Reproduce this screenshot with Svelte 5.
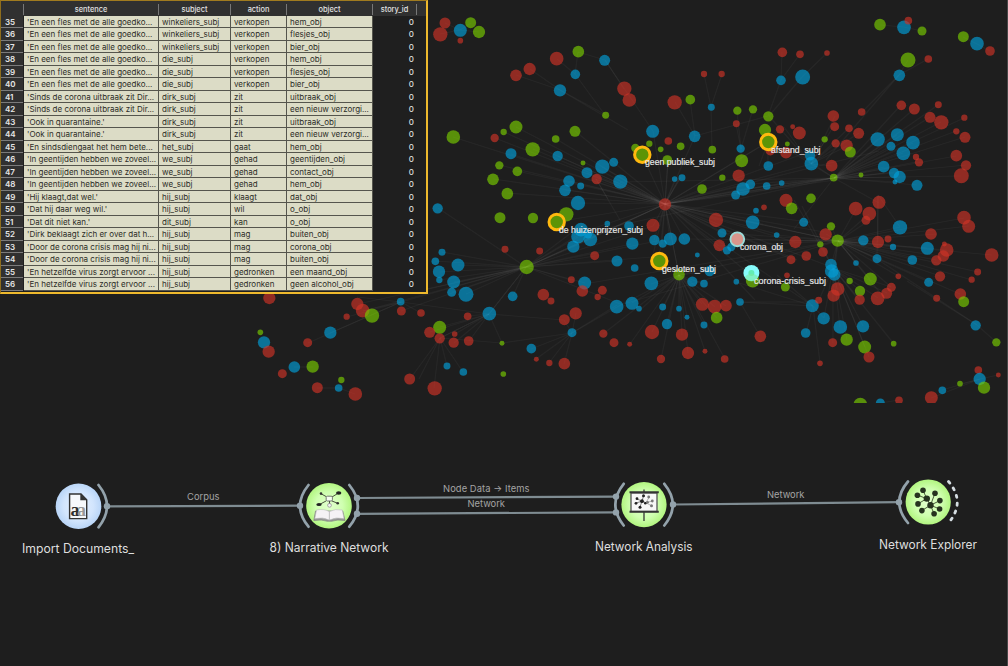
<script>
  const rows = [
    [35, "'En een fles met de alle goedko...", 'winkeliers_subj', 'verkopen', 'hem_obj'],
    [36, "'En een fles met de alle goedko...", 'winkeliers_subj', 'verkopen', 'flesjes_obj'],
    [37, "'En een fles met de alle goedko...", 'winkeliers_subj', 'verkopen', 'bier_obj'],
    [38, "'En een fles met de alle goedko...", 'die_subj', 'verkopen', 'hem_obj'],
    [39, "'En een fles met de alle goedko...", 'die_subj', 'verkopen', 'flesjes_obj'],
    [40, "'En een fles met de alle goedko...", 'die_subj', 'verkopen', 'bier_obj'],
    [41, "'Sinds de corona uitbraak zit Dir...", 'dirk_subj', 'zit', 'uitbraak_obj'],
    [42, "'Sinds de corona uitbraak zit Dir...", 'dirk_subj', 'zit', 'een nieuw verzorgi...'],
    [43, "'Ook in quarantaine.'", 'dirk_subj', 'zit', 'uitbraak_obj'],
    [44, "'Ook in quarantaine.'", 'dirk_subj', 'zit', 'een nieuw verzorgi...'],
    [45, "'En sindsdiengaat het hem bete...", 'het_subj', 'gaat', 'hem_obj'],
    [46, "'In geentijden hebben we zoveel...", 'we_subj', 'gehad', 'geentijden_obj'],
    [47, "'In geentijden hebben we zoveel...", 'we_subj', 'gehad', 'contact_obj'],
    [48, "'In geentijden hebben we zoveel...", 'we_subj', 'gehad', 'hem_obj'],
    [49, "'Hij klaagt,dat wel.'", 'hij_subj', 'klaagt', 'dat_obj'],
    [50, "'Dat hij daar weg wil.'", 'hij_subj', 'wil', 'o_obj'],
    [51, "'Dat dit niet kan.'", 'dit_subj', 'kan', 'o_obj'],
    [52, "'Dirk beklaagt zich er over dat h...", 'hij_subj', 'mag', 'buiten_obj'],
    [53, "'Door de corona crisis mag hij ni...", 'hij_subj', 'mag', 'corona_obj'],
    [54, "'Door de corona crisis mag hij ni...", 'hij_subj', 'mag', 'buiten_obj'],
    [55, "'En hetzelfde virus zorgt ervoor ...", 'hij_subj', 'gedronken', 'een maand_obj'],
    [56, "'En hetzelfde virus zorgt ervoor ...", 'hij_subj', 'gedronken', 'geen alcohol_obj']
  ];

  // Node clusters: origin in px, then "kind x y radius" in thirds of a pixel.
  const clusters = [
    [428, 0, 'r 51 69 16,r 37 103 21,b 97 91 19,g 128 68 16,g 153 96 18,r 97 122 8,r 386 176 20,g 451 155 17,b 530 181 16,b 442 223 14,r 305 207 18,r 264 226 17,b 396 271 18,r 589 266 21,g 533 346 10,g 264 381 19,g 227 396 9,r 200 414 12,g 76 411 20,g 383 417 11,g 441 394 16,g 314 448 21,b 249 461 16,b 389 468 15,g 214 496 12,g 268 514 14,g 195 538 17,g 238 581 17,g 465 489 7,b 523 500 21,b 557 487 13,b 477 518 16,r 506 537 15,b 423 543 17,b 411 571 17,b 458 558 10,b 577 545 21'],
    [618, 0, 'r 34 300 20,b 104 394 19,r 170 307 21,g 217 299 14,r 258 222 9,r 311 222 9,b 280 322 10,b 230 409 17,r 151 423 11,g 94 431 9,g 128 448 8,g 188 439 11,g 52 444 12,g 283 449 11,g 148 480 14,b 192 533 10,b 170 537 8,g 252 567 14,g 313 533 9,r 362 527 18,g 371 482 19,b 368 446 12,r 355 371 10,g 358 332 12,g 405 328 12,g 451 349 15,g 441 390 18,r 486 388 12,r 524 380 7,r 544 399 19,r 493 157 14,r 546 163 11,b 489 241 14,b 554 231 22,g 508 432 7,r 457 452 14,r 504 458 17,b 576 466 15,b 580 491 20,b 451 498 14,b 491 549 8,b 446 558 11,b 397 553 14,b 375 567 20,b 353 585 13'],
    [808, 0, 'g 216 74 17,b 288 82 20,r 301 62 11,g 342 93 13,g 466 110 16,b 507 131 20,r 546 153 14,r 57 159 8,g 300 180 22,r 361 177 11,b 274 226 17,r 280 316 14,r 319 327 16,r 391 314 10,r 366 352 16,r 400 367 21,r 469 353 9,r 445 394 9,r 471 412 16,r 445 467 17,r 474 496 15,r 460 527 22,r 161 336 11,r 76 348 17,r 80 380 13,r 123 385 11,r 152 400 16,r 83 430 12,r 116 437 18,g 127 456 16,g 50 418 9,b 209 418 21,b 268 404 19,b 249 439 13,b 315 428 20,b 286 460 20,r 324 471 9,r 333 487 12,b 227 500 17,b 258 519 15,b 275 531 18,b 261 546 7,b 327 556 16,r 71 497 17,g 77 533 11,g 159 525 7'],
    [428, 195, 'b 29 40 15,g 216 68 16,g 315 69 15,g 415 58 21,b 450 24 21,b 459 104 20,b 450 125 20,b 487 133 20,b 480 118 12,b 436 155 18,b 538 86 8,b 567 198 16,r 231 163 10,r 335 168 10,r 500 182 13,b 42 172 10,b 22 199 11,b 33 230 18,b 34 255 9,b 90 210 19,b 77 261 19,b 71 292 13,b 114 298 22,g 296 216 21,b 254 304 14,b 184 356 20,r 119 364 11,r 346 299 17,r 369 318 10,r 430 254 10,b 470 264 19,r 463 288 17,r 523 286 13,r 509 306 9,r 443 355 18,r 409 374 16,b 432 413 13,b 566 335 20,g 35 397 19,r 5 412 16,r 35 430 15,r 80 417 8,r 77 443 15,r 122 438 14,g 222 445 7,b 310 461 14,r 526 416 12,r 558 443 13,b 57 513 10,b 106 531 11,g 226 537 8,r 325 493 7,r 364 504 9,r 409 506 17,r 20 580 21'],
    [618, 195, 'b 33 93 14,r 105 91 19,r 141 28 18,b 109 135 15,b 134 146 12,b 157 132 19,b 199 132 17,b 43 146 18,b 50 219 11,b 238 180 7,g 183 239 17,b 275 228 15,b 223 260 15,b 258 266 11,b 100 265 20,b 42 325 19,b 63 341 8,b 134 336 10,b 183 341 8,b 207 367 7,b 147 387 15,b 258 390 10,r 102 411 21,r 192 419 18,r 210 474 18,r 129 492 12,r 261 469 7,r 320 492 11,r 35 448 7,r 253 328 19,r 290 335 20,r 324 332 17,g 296 368 17,b 366 321 11,b 355 260 8,r 427 424 17,r 294 75 21,b 312 114 13,r 304 151 17,b 327 166 12,b 340 156 12,b 404 82 20,b 414 47 8,r 438 37 8,r 504 16 19,g 521 40 17,g 579 10 14,b 557 82 13,b 476 120 8,r 532 141 18,r 519 194 13,r 565 183 14,r 507 241 8,g 502 276 13,g 404 257 20,b 583 332 19,b 563 414 14'],
    [808, 195, 'g 69 94 12,r 53 118 18,g 37 148 9,g 89 137 18,r 45 171 14,b 69 209 17,b 71 228 20,b 79 239 18,b 144 204 8,b 166 136 15,r 143 41 20,r 184 56 20,r 174 76 13,r 213 22 19,r 210 141 18,r 240 132 10,b 276 97 21,b 255 156 9,b 207 191 13,r 369 117 17,b 358 160 19,b 313 195 14,r 385 196 15,r 406 183 17,r 416 165 20,r 409 147 7,r 468 68 20,r 482 94 19,r 551 180 20,r 509 231 10,r 491 254 9,r 396 244 15,b 362 262 13,r 457 297 17,g 467 320 16,r 386 310 10,r 271 244 8,g 125 258 9,g 187 252 19,g 156 288 15,r 155 314 15,r 209 310 20,r 236 295 16,r 250 277 13,r 89 282 20,r 77 302 18,r 32 316 10,b 47 370 18,b 97 396 20,b 165 394 18,g 116 434 18,g 170 456 19,r 183 486 16,r 74 443 13,g 257 446 8,r 36 505 8,b 503 391 15,g 565 442 12,r 511 525 11,b 515 552 18,g 528 578 18,r 571 540 7,g 456 566 8,b 403 586 11,r 370 608 19,r 273 616 11,b 217 624 13,g 157 629 20'],
    [240, 290, 'r 88 24 18,r 352 42 18,r 368 62 20,g 396 77 21,r 320 80 9,b 482 35 11,r 484 63 13,r 543 69 11,b 271 128 18,r 203 158 13,g 61 127 8,b 72 157 18,r 86 185 18,r 127 251 13,b 163 231 17,g 218 230 18,r 232 293 16,b 296 294 11,g 304 270 9,r 346 312 20,r 509 267 16']
  ];
  const nodes = clusters.flatMap(([ox, oy, list]) =>
    list.split(',').map((item) => {
      const [kind, x, y, r] = item.split(' ');
      return { kind, x: ox + x / 3, y: oy + y / 3, r: r / 3 + 0.15 };
    })
  );

  // Each hub: its position, then the ends of its edges.
  const hubs = [
    '665 204,453 137,495 138,504 132,516 127,533 149,499 165,493 179,507 193,556 139,575 131,558 156,511 154,517 171,587 173,595 179,570 181,565 190,602 167,620 182,578 203,642 155,653 131,668 160,680 178,702 189,737 195,743 189,750 184,759 147,768 142,800 155,811 164,767 186,782 183,834 178,526 267,556 222,574 235,590 239,573 247,653 226,653 255,654 240,662 244,670 239,684 239,659 261,679 275,716 220,722 233,719 246,737 239,753 222,780 235,795 242,810 222,838 241,824 232,753 277,785 287,826 265,797 260,791 259,755 300,879 151,884 173',
    '526 267,438 208,442 252,435 261,439 272,439 280,458 265,454 282,452 292,466 294,424 290,401 302,363 311,401 311,358 304,573 247,578 237,590 239,575 230,580 234,617 261,631 244,653 226,662 240,665 204,571 280,585 283,513 296,489 314,595 256,665 256,628 307',
    '834 178,901 105,914 109,938 105,930 117,941 122,964 118,956 131,965 137,956 156,966 165,961 176,878 139,897 135,891 146,913 143,903 153,916 162,884 167,894 173,900 177,895 182,917 185,861 175,737 195,743 189,750 184,665 204,811 164,879 203,800 155,782 183,767 186,794 229,620 182,580 234',
    '838 241,863 240,878 242,900 227,893 247,877 259,912 259,927 248,937 234,964 218,969 226,992 255,978 272,972 280,936 260,940 256,947 250,898 276,940 276,929 282,960 294,856 263,870 279,886 300,891 287,831 265,834 273,777 235,753 222,737 239,722 233,719 246,665 204,831 226,826 234,856 209,869 214,870 220,791 241,689 239,678 275,627 303,590 283',
    '679 275,665 204,651 284,632 303,639 311,663 307,679 309,687 317,667 324,652 332,682 335,688 353,661 359,705 351,725 359,704 325,702 304,715 307,726 306,692 282,704 284,710 271,717 318,630 344,603 334,617 307,709 271',
    '489 314,468 316,440 327,430 332,440 338,455 334,454 343,469 341,502 343,526 267,564 320,401 302',
    '833 268,838 241,834 289,837 289,819 300,824 318,840 327,863 326,847 340,865 347,869 357,894 344,833 343,857 288,860 300,878 298,887 293,891 287,802 206,794 200',
    '813 306,740 302,820 363,806 333,785 287,824 318,736 282,777 275',
    '811 164,826 139,833 127,835 116,849 128,859 133,836 143,847 146,832 166,792 152,784 127,769 116',
    '572 333,502 343,536 359,549 363,564 364,531 349,564 320,576 313,617 307,617 305',
    '665 204,679 178,695 136,681 177,668 160,675 179',
    '802 77,769 116,827 53',
    '781 80,782 52,800 54,768 116',
    '899 75,908 60,928 59,862 112,826 160',
    '695 136,690 100,675 102,768 116',
    '711 107,704 74,722 74,712 150',
    '741 149,736 124,737 111,753 109,741 161',
    '560 90,516 75,530 69,606 115,628 130',
    '575 74,557 59,578 52,605 115',
    '605 60,578 52,624 89,653 131',
    '460 30,445 23,440 34,471 23,479 32',
    '904 27,880 25,922 31',
    '401 302,357 297,363 311,347 317,330 333,308 343,421 313',
    '440 338,502 343,447 366,419 379,410 379,463 372,434 388,489 314',
    '294 367,313 367',
    '339 388,317 388,355 394',
    '980 379,998 375,960 384,942 390,931 398',
    '977 44,963 37,990 51',
    '880 403,899 400,860 404',
    '740 302,760 336,813 302',
    '768 142,768 166,759 166',
    '596 179,608 199,620 220',
    '977 325,996 342,907 281,877 259',
    '878 195,878 242,877 259,900 227'
  ];
  const edges = hubs.flatMap((hub) => {
    const [from, ...to] = hub.split(',').map((p) => p.split(' ').map(Number));
    return to.map((t) => [...from, ...t]);
  });

  const selected = [
    [642.3, 154.7], [768.3, 142], [556.7, 222], [659.3, 261]
  ];
  const names = [
    ['geen publiek_subj', 645, 165.3, 70], ['afstand_subj', 771, 153, 49.5],
    ['de huizenprijzen_subj', 559, 232.6, 84], ['gesloten_subj', 662, 272, 54],
    ['corona_obj', 740, 250.2, 43], ['corona-crisis_subj', 754, 283.6, 72]
  ];

  const widgets = [
    ['Import Documents_', 22, 552.7, 112], ['8) Narrative Network', 269.5, 552.2, 119],
    ['Network Analysis', 595, 551.4, 97.5], ['Network Explorer', 879, 548.8, 98]
  ];
  const linkNames = [
    ['Corpus', 187, 500.4, 32.5], ['Node Data → Items', 443, 491.8, 86.5],
    ['Network', 467.5, 507.2, 37.5], ['Network', 767, 497.6, 37.5]
  ];
</script>

<main>
  <section class="graph">
    <svg width="1007" height="403" viewBox="0 0 1007 403">
      <g class="edges">
        {#each edges as [x1, y1, x2, y2]}<line {x1} {y1} {x2} {y2} />{/each}
      </g>
      {#each nodes as n}<circle class={n.kind} cx={n.x} cy={n.y} r={n.r} />{/each}
      {#each selected as [cx, cy]}
        <circle class="picked" {cx} {cy} r="7.7" />
      {/each}
      <circle cx="737.3" cy="239.3" r="6.9" fill="#d9958b" stroke="#9adbd8" stroke-width="1.9" />
      <circle cx="751.4" cy="273" r="8" fill="#86fbfb" />
      <circle cx="751.4" cy="273" r="3" fill="#62edb5" />
      <path d="M745 277a7 7 0 0 0 13 0a8 8 0 0 0-13 0" fill="#7be9a0" opacity=".6" />
      <g class="names">
        {#each names as [t, x, y, w]}<text {x} {y} textLength={w} lengthAdjust="spacingAndGlyphs">{t}</text>{/each}
      </g>
    </svg>
  </section>

  <section class="table">
    <div class="row head">
      <span class="idx"></span><span>sentence</span><span>subject</span><span>action</span><span>object</span><span class="id">story_id</span><span class="end"></span>
    </div>
    {#each rows as [n, sentence, subject, action, object]}
      <div class="row">
        <span class="idx">{n}</span>
        <span class="cell">{sentence}</span>
        <span class="cell">{subject}</span>
        <span class="cell">{action}</span>
        <span class="cell">{object}</span>
        <span class="num">0</span>
        <span class="end"></span>
      </div>
    {/each}
  </section>

  <section class="flow">
    <svg width="1007" height="263" viewBox="0 403 1007 263">
      <defs>
        <radialGradient id="blue"><stop offset="0" stop-color="#e6f1ff" /><stop offset=".65" stop-color="#d2e5fd" /><stop offset="1" stop-color="#b9d5f7" /></radialGradient>
        <radialGradient id="green"><stop offset="0" stop-color="#e2ffcf" /><stop offset=".6" stop-color="#cfffb0" /><stop offset="1" stop-color="#b2f580" /></radialGradient>
      </defs>
      <g class="links">
        <path d="M107 506.4L300 505.7M357 498L616 496.6M357 513.8L616 512.4M673 504.5L899 502.2" />
      </g>
      <g class="arcs">
        <path d="M98.5 485Q115.5 506 98.5 527.3M308.5 485Q291.5 506 308.5 526.7M349.3 485Q366.3 506 349.3 526.7M623.7 483.8Q607 504.5 623.7 525.5M664.3 483.8Q681.3 504.5 664.3 525.5M908 481.5Q890.5 502 908 523" />
        <path class="dash" d="M948.5 481.5Q966 502 948.5 523" />
      </g>
      <g class="dots">
        <circle cx="107" cy="506.3" r="3.2" /><circle cx="300" cy="505.8" r="3.2" />
        <circle cx="357" cy="498" r="3.2" /><circle cx="357" cy="513.8" r="3.2" />
        <circle cx="616" cy="496.6" r="3.2" /><circle cx="616" cy="512.4" r="3.2" />
        <circle cx="673" cy="504.5" r="3.2" /><circle cx="899" cy="502.2" r="3.2" />
      </g>
      <circle cx="78.5" cy="506.2" r="22.8" fill="url(#blue)" />
      <circle cx="329" cy="505.8" r="22.8" fill="url(#green)" />
      <circle cx="644" cy="504.6" r="22.6" fill="url(#green)" />
      <circle cx="928.2" cy="502" r="22.6" fill="url(#green)" />

      <path d="M69.6 494H81L86.7 499.7V518.6H69.6Z" fill="#f6f8fb" stroke="#333" stroke-width="1.4" />
      <path d="M80.3 493.6V500.3H87Z" fill="#333" />
      <text x="70.4" y="516.2" class="glyph">a<tspan class="light" dx="-2.4">a</tspan></text>

      <g stroke="#39402f" stroke-width=".9" fill="none">
        <path d="M326 496.5L321 493.7M332 497L338 493.3M326 501L319.5 504.5M332 501L337 503M329.5 501V504.5" />
      </g>
      <rect x="326.2" y="496.2" width="6.2" height="4.8" rx="1.2" fill="#f5fff0" stroke="#555" stroke-width=".8" />
      <ellipse cx="338.7" cy="493" rx="2.7" ry="1.7" fill="#222" /><ellipse cx="319" cy="504.5" rx="2.7" ry="1.5" fill="#222" />
      <circle cx="321" cy="493.6" r="1.3" fill="#333" /><circle cx="337.7" cy="503.2" r="1.3" fill="#333" />
      <circle cx="329.5" cy="505.3" r="1.9" fill="#f4f4f4" stroke="#888" stroke-width=".7" />
      <path d="M315.5 511L313.8 520.5Q322 519.3 327 521.2H332Q337 519.3 345 520.5L342.8 511Z" fill="#999" stroke="#777" stroke-width=".6" />
      <path d="M316.5 510Q324 508.5 329.4 511.6V520Q323 516.7 314.8 518.6ZM342.3 510Q335 508.5 329.4 511.6V520Q336 516.7 344 518.6Z" fill="#f5f2f5" stroke="#bbb" stroke-width=".6" />

      <path d="M644 489.5V521" stroke="#333" stroke-width="1.3" />
      <rect x="631" y="493" width="26" height="18.5" fill="#f7f7f7" stroke="#555" stroke-width="1.3" />
      <path d="M629.5 492.2H658.8M629.5 511.8H658.8" stroke="#333" stroke-width="2" />
      <path d="M637 499L642 501L643.5 496M636 503L642 501.2L640 507M642 501.2L647 503" fill="none" stroke="#333" stroke-width=".6" />
      <path d="M646 502.8L649 497.3M646 502.8L652 501M646 502.8L651.5 505.8" stroke="#888" stroke-width=".6" />
      <g fill="#222"><circle cx="637" cy="498.7" r="1.4" /><circle cx="643.5" cy="495.7" r="1.5" /><circle cx="636" cy="503.3" r="1.4" /><circle cx="642" cy="501.2" r="1.9" /><circle cx="640" cy="507.3" r="1.5" /><circle cx="645.3" cy="503.2" r="1.3" /></g>
      <g fill="#777"><circle cx="648.7" cy="497" r="1.4" /><circle cx="652.3" cy="501" r="1.4" /><circle cx="651.5" cy="505.7" r="1.5" /><circle cx="647.5" cy="502.3" r="1.4" /></g>

      <path d="M923 490.5L926.8 498.6L917.5 495.2M926.8 498.6L918 503.8M921.9 510.5L930.5 505.2L935 493.2M926.8 498.6L930.5 505.2L939.9 500.6M930.5 505.2L939.6 509M930.5 505.2L934.1 513.8" fill="none" stroke="#4a5f3a" stroke-width="1" />
      <g fill="#26331f">
        <circle cx="923" cy="490.3" r="2.8" /><circle cx="917.4" cy="495.2" r="2.8" /><circle cx="935" cy="493.2" r="2.8" /><circle cx="926.8" cy="498.6" r="3.2" /><circle cx="939.9" cy="500.6" r="2.8" /><circle cx="918" cy="503.9" r="2.8" /><circle cx="930.5" cy="505.2" r="3.2" /><circle cx="921.9" cy="510.6" r="2.8" /><circle cx="939.6" cy="509" r="2.8" /><circle cx="934.1" cy="513.8" r="2.8" />
      </g>

      <g class="titles">
        {#each widgets as [t, x, y, w]}<text {x} {y} textLength={w} lengthAdjust="spacingAndGlyphs">{t}</text>{/each}
      </g>
      <g class="channels">
        {#each linkNames as [t, x, y, w]}<text {x} {y} textLength={w}>{t}</text>{/each}
      </g>
    </svg>
  </section>
</main>

<style>
  :global(body) { background: #1e1e1e; }
  main {
    box-sizing: border-box;
    width: 1008px;
    height: 666px;
    display: grid;
    grid-template: 403px 263px / 1fr;
    background: #1e1e1e;
    border-right: 1px solid #484848;
    overflow: hidden;
    font-family: Inter, 'Liberation Sans', sans-serif;
  }
  svg { display: block; }
  .graph { grid-area: 1 / 1; }
  .table { grid-area: 1 / 1; }
  .flow { grid-area: 2 / 1; }

  .edges { stroke: #fff; stroke-opacity: .04; stroke-width: 1.2; }
  .r { fill: rgb(207, 51, 39); fill-opacity: .65; }
  .b { fill: rgb(2, 159, 218); fill-opacity: .65; }
  .g { fill: rgb(122, 206, 0); fill-opacity: .65; }
  .picked { fill: #5c9406; stroke: #ffb90f; stroke-width: 3; }
  .names { font: 8.6px 'Liberation Sans', sans-serif; fill: #ececec; stroke: #ececec; stroke-width: .15; }

  .table {
    box-sizing: border-box;
    position: relative;
    width: 428px;
    height: 294px;
    background: #1f1f1f;
    border: 2px solid #eeb92d;
    border-left: 1px solid #8e6d1c;
    border-top: 1px solid #a07b1f;
    font-size: 8px;
    color: #2c2c26;
  }
  .row {
    display: grid;
    grid-template-columns: 23px 135px 72px 56px 86px 44px 1fr;
    grid-template-rows: 100%;
    height: 12px;
    line-height: 12px;
    white-space: nowrap;
  }
  .row:nth-child(odd) { height: 13px; }
  .row.head {
    height: 15px;
    text-align: center;
    background: #303030;
    color: #e2e2e2;
    font-size: 7.4px;
    font-weight: 500;
  }
  .head span {
    box-sizing: border-box;
    margin-top: 3px;
    height: 11px;
    line-height: 12px;
    border-right: 1px solid #777;
  }
  .head .end { border: 0; }
  .idx {
    box-sizing: border-box;
    background: #303030;
    border-bottom: 1px solid #7b7b7b;
    color: #e6e6e6;
    font-weight: 600;
    padding-left: 4px;
    margin-right: 1px;
  }
  .head .idx { border-bottom: 0; margin-right: 0; }
  .cell {
    box-sizing: border-box;
    overflow: hidden;
    background: #dcdcc6;
    border-right: 1px solid #55554d;
    border-bottom: 1px solid #55554d;
    padding-left: 3px;
  }
  .num { color: #dedede; font-weight: 500; text-align: right; padding-right: 3px; }

  .links { stroke: #7f8c92; stroke-width: 2.2; fill: none; }
  .arcs { stroke: #93a2ab; stroke-width: 2.7; fill: none; stroke-linecap: round; }
  .arcs .dash { stroke: #d5dde2; stroke-width: 2.8; stroke-dasharray: 2 6; }
  .dots { fill: #93a2ab; }
  .glyph { font: bold 18px 'Liberation Serif', serif; fill: #2e2e2e; }
  .light { fill: #999; }
  .titles { font-size: 12.4px; fill: #dedede; }
  .channels { font-size: 9.4px; fill: #a4a4a4; }
</style>
